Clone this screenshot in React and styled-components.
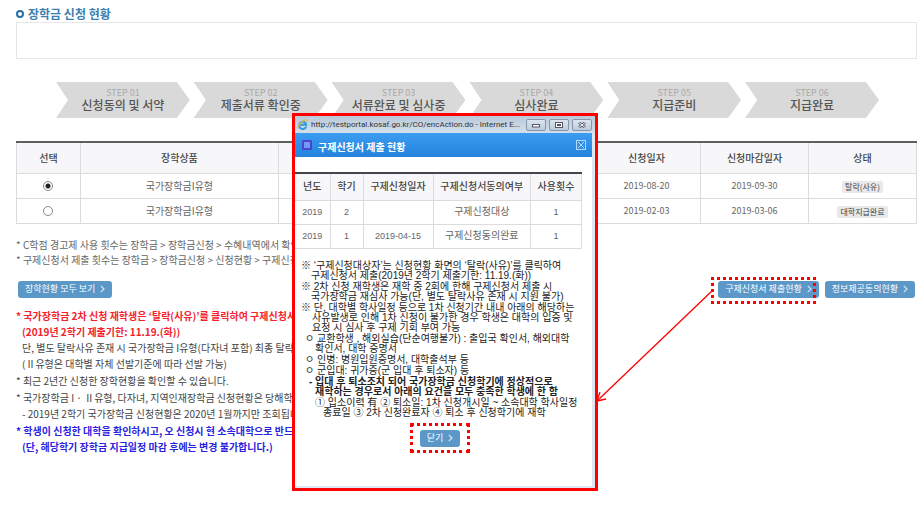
import React, { useState } from 'react'
import styled, { createGlobalStyle } from 'styled-components'

const GlobalStyle = createGlobalStyle`
    *{
        box-sizing: border-box;
    }
    body{
        margin: 0;
        background-color: white;
        overflow: hidden;
    }
    body, button{
        font-family: "Noto Sans CJK KR", sans-serif;
    }
    ul, ol, p, h1, h2{
        margin: 0;
        padding: 0;
        list-style: none;
    }
    button{
        cursor: pointer;
    }
`

const Container = styled.div`
    position: relative;
    padding: 6px 1px 60px 16px;
    font-size: 10px;
    line-height: 16px;
    color: #555;
`
const Title = styled.h1`
    display: flex;
    align-items: center;
    gap: 4px;
    font-size: 12px;
    line-height: 16px;
    font-weight: 700;
    color: #3c80b0;
`
const Ring = styled.span`
    width: 8px;
    height: 8px;
    border: 2px solid #2470a8;
    border-radius: 50%;
`
const SearchBox = styled.div`
    height: 37px;
    border: 1px solid #e6e6e6;
`

const Steps = styled.ol`
    display: flex;
    gap: 4px;
    padding: 23px 38px 23px 40px;
`
const Step = styled.li`
    flex: 1;
    height: 36px;
    padding-top: 5px;
    text-align: center;
    background-color: #d9d9d9;
    clip-path: polygon(0 0, calc(100% - 13px) 0, 100% 50%, calc(100% - 13px) 100%, 0 100%, 12px 50%);
`
const StepNo = styled.div`
    font-size: 9px;
    line-height: 11px;
    color: #a9a9a9;
`
const StepName = styled.div`
    font-size: 12px;
    line-height: 14px;
    font-weight: 500;
    color: #555;
`

const Table = styled.table`
    width: 100%;
    table-layout: fixed;
    border-collapse: collapse;
    border-top: 2px solid #5c605e;
    text-align: center;
    color: #666;
`
const Col = styled.col`
    width: ${props=>props.$width};
`
const Th = styled.th`
    height: 31px;
    padding: 0;
    border: 1px solid #dcdcdc;
    border-top: none;
    background-color: #f7f7f9;
    font-weight: 500;
    color: #444;
`
const Td = styled.td`
    height: 25px;
    padding: 0;
    border: 1px solid #dcdcdc;
    font-size: ${props=>props.$number ? "9px" : "10px"};
`
const Radio = styled.input`
    appearance: none;
    display: block;
    width: 10px;
    height: 10px;
    margin: 0 auto;
    border: 1px solid #8a8a8a;
    border-radius: 50%;
    background-color: white;

    &:checked{
        background-image: radial-gradient(circle, #222 0, #222 2px, white 3px);
    }
`
const Status = styled.span`
    display: inline-block;
    padding: 0 3px;
    border-radius: 2px;
    background-color: #e9e9e9;
    font-size: 8px;
    line-height: 12px;
    color: #444;
`

const Usage = styled.ul`
    padding-top: 13px;
    line-height: 15px;
    white-space: nowrap;
    color: #666;
`
const ButtonRow = styled.div`
    display: flex;
    justify-content: space-between;
    padding: 14px 2px 10px;
`
const ButtonGroup = styled.div`
    display: flex;
    gap: 6px;
`
const Marked = styled.div`
    position: relative;
`
const Mark = styled.span`
    position: absolute;
    inset: ${props=>props.$inset};
    border: 3px dotted #ff0000;
    pointer-events: none;
`
const Button = styled.button`
    display: flex;
    align-items: center;
    gap: 5px;
    height: 17px;
    padding: 0 7px;
    border: none;
    border-radius: 3px;
    background-color: #5b98c8;
    font-size: 9px;
    line-height: 16px;
    color: white;
`

const Notes = styled.ul`
    display: flex;
    flex-direction: column;
    gap: 1px;
    white-space: nowrap;
`
const Note = styled.li`
    padding-left: 6px;
    text-indent: -6px;
    font-weight: ${props=>props.$bold ? 700 : 400};
    color: ${props=>props.$color || "#444"};
`
const NoteLine = styled.p`
    text-indent: 0;
    color: ${props=>props.$color};
    font-weight: 400;
`

const Arrow = styled.svg`
    position: absolute;
    left: 596px;
    top: 288px;
`

const Popup = styled.section`
    position: absolute;
    left: 292px;
    top: 113px;
    width: 306px;
    border: 3px solid #ff0000;
    background-color: #dde6f1;
`
const WindowBar = styled.header`
    display: flex;
    align-items: center;
    gap: 3px;
    height: 17px;
    padding: 0 3px 0 2px;
    background: linear-gradient(#b9c9da, #d3dfeb);
`
const Address = styled.span`
    flex: 1;
    min-width: 0;
    font-family: Roboto, "Noto Sans CJK KR", sans-serif;
    font-size: 8px;
    line-height: 14px;
    white-space: nowrap;
    color: #333;
`
const WindowButton = styled.button`
    display: flex;
    flex-shrink: 0;
    align-items: center;
    justify-content: center;
    width: 20px;
    height: 12px;
    padding: 0;
    border: 1px solid #8796a8;
    border-radius: 2px;
    background: linear-gradient(#dbe5ef, #bccbdc);
`
const PopupBody = styled.div`
    margin-right: 3px;
    margin-bottom: 2px;
    padding-bottom: 39px;
    background-color: white;
`
const PopupHead = styled.div`
    display: flex;
    align-items: center;
    gap: 6px;
    height: 24px;
    padding: 0 6px 0 7px;
    background: linear-gradient(#3b9df1, #2482dc);
`
const Square = styled.span`
    width: 10px;
    height: 10px;
    border: 2px solid #4a44cf;
    border-radius: 1px;
    background-color: #6f9cf0;
`
const PopupTitle = styled.h2`
    flex: 1;
    padding-top: 3px;
    font-size: 10px;
    line-height: 14px;
    font-weight: 700;
    color: white;
`
const CloseIcon = styled.button`
    display: flex;
    padding: 0;
    border: none;
    background: none;
`
const PopupTableWrap = styled.div`
    padding: 15px 10px 12px 0;
`
const PopupTable = styled(Table)`
    border-top-color: #43464f;
    font-family: "Liberation Sans", "Noto Sans CJK KR", sans-serif;

    th{
        height: 27px;
        border-left: none;
    }
    td{
        height: 24px;
        border-left: none;
    }
`
const Guide = styled.ul`
    display: flex;
    flex-direction: column;
    gap: 1px;
    padding-left: 6px;
    font-family: "Liberation Sans", "Noto Sans CJK KR", sans-serif;
    font-size: 10px;
    line-height: 10px;
    white-space: nowrap;
    color: #222;
`
const GuideItem = styled.li`
    padding-left: ${props=>props.$left}px;
    text-indent: -${props=>props.$hang}px;
    font-weight: ${props=>props.$bold ? 700 : 400};
`
const GuideLine = styled.span`
    display: block;

    & + &{
        text-indent: 0;
    }
`
const PopupFooter = styled.div`
    display: flex;
    justify-content: center;
    padding-top: 12px;
    padding-right: 7px;
`

const steps = ["신청동의 및 서약", "제출서류 확인중", "서류완료 및 심사중", "심사완료", "지급준비", "지급완료"]

const rows = [
    { id: 1, name: "국가장학금I유형", date: "2019-08-20", due: "2019-09-30", status: "탈락(사유)" },
    { id: 2, name: "국가장학금I유형", date: "2019-02-03", due: "2019-03-06", status: "대학지급완료" },
]

const popupRows = [
    { year: "2019", term: "2", date: "", agree: "구제신청대상", count: "1" },
    { year: "2019", term: "1", date: "2019-04-15", agree: "구제신청동의완료", count: "1" },
]

const guides = [
    { left: 10, hang: 10, lines: ["※ ‘구제신청대상자’는 신청현황 화면의 ‘탈락(사유)’를 클릭하여", "구제신청서 제출(2019년 2학기 제출기한: 11.19.(화))"] },
    { left: 10, hang: 10, lines: ["※ 2차 신청 재학생은 재학 중 2회에 한해 구제신청서 제출 시", "국가장학금 재심사 가능(단, 별도 탈락사유 존재 시 지원 불가)"] },
    { left: 11, hang: 11, lines: ["※ 단, 대학별 학사일정 등으로 1차 신청기간 내내 아래의 해당하는", "사유발생로 인해 1차 신청이 불가한 경우 학생은 대학의 입증 및", "요청 시 심사 후 구제 기회 부여 가능"] },
    { left: 14, hang: 10, lines: ["ㅇ 교환학생 , 해외실습(단순여행불가) : 출입국 확인서, 해외대학", "확인서, 대학 증명서"] },
    { left: 14, hang: 10, lines: ["ㅇ 인병: 병원입원증명서, 대학출석부 등"] },
    { left: 14, hang: 10, lines: ["ㅇ 군입대: 귀가증(군 입대 후 퇴소자) 등"] },
    { left: 14, hang: 6, bold: true, lines: ["- 입대 후 퇴소조치 되어 국가장학금 신청학기에 정상적으로", "재학하는 경우로서 아래의 요건을 모두 충족한 학생에 한 함"] },
    { left: 22, hang: 8, lines: ["① 입소이력 有 ② 퇴소일: 1차 신청개시일 ~ 소속대학 학사일정", "종료일 ③ 2차 신청완료자 ④ 퇴소 후 신청학기에 재학"] },
]

const Chevron = () => (
    <svg width="5" height="8" viewBox="0 0 5 8" fill="none" stroke="#d6e8f6" strokeWidth="1.2">
        <path d="M0.8 0.8 L4 4 L0.8 7.2"/>
    </svg>
)

const BrowserIcon = () => (
    <svg width="11" height="11" viewBox="0 0 11 11" fill="none">
        <path d="M9.2 7.4 A3.6 3.6 0 1 1 9.3 5.8 H3.2" stroke="#2b9be0" strokeWidth="1.9"/>
        <path d="M1 10 C-0.6 8.6 3.6 2.6 8 1 C10.2 0.2 10.6 1.2 9.8 2.8" stroke="#f0b92c" strokeWidth="1.1"/>
    </svg>
)

const RequestPopup = ({ onClose }) => (
    <Popup aria-label="구제신청서 제출 현황">
        <WindowBar>
            <BrowserIcon/>
            <Address>http://testportal.kosaf.go.kr/CO/encAction.do - Internet E...</Address>
            <WindowButton aria-label="최소화">
                <svg width="8" height="6" viewBox="0 0 8 6"><rect x="0.5" y="2.5" width="7" height="2.5" fill="#fff" stroke="#556"/></svg>
            </WindowButton>
            <WindowButton aria-label="최대화">
                <svg width="8" height="6" viewBox="0 0 8 6"><rect x="0.5" y="0.5" width="7" height="5" fill="#fff" stroke="#556"/><rect x="2.5" y="2.5" width="3" height="1" stroke="#556" fill="none"/></svg>
            </WindowButton>
            <WindowButton aria-label="창 닫기" onClick={onClose}>
                <svg width="8" height="6" viewBox="0 0 8 6"><path d="M1 0.5 L7 5.5 M7 0.5 L1 5.5" stroke="#556" strokeWidth="2.6"/><path d="M1 0.5 L7 5.5 M7 0.5 L1 5.5" stroke="#fff"/></svg>
            </WindowButton>
        </WindowBar>
        <PopupBody>
            <PopupHead>
                <Square/>
                <PopupTitle>구제신청서 제출 현황</PopupTitle>
                <CloseIcon aria-label="닫기" onClick={onClose}>
                    <svg width="10" height="10" viewBox="0 0 10 10" fill="none" stroke="#b5dafa">
                        <rect x="0.5" y="0.5" width="9" height="9"/>
                        <path d="M2 2 L8 8 M8 2 L2 8"/>
                    </svg>
                </CloseIcon>
            </PopupHead>
            <PopupTableWrap>
                <PopupTable>
                    <colgroup>
                        <Col $width="35px"/>
                        <Col $width="33px"/>
                        <Col $width="70px"/>
                        <Col/>
                        <Col $width="51px"/>
                    </colgroup>
                    <thead>
                        <tr>
                            <Th>년도</Th>
                            <Th>학기</Th>
                            <Th>구제신청일자</Th>
                            <Th>구제신청서동의여부</Th>
                            <Th>사용횟수</Th>
                        </tr>
                    </thead>
                    <tbody>
                        {popupRows.map((row)=>(
                            <tr key={row.term}>
                                <Td $number>{row.year}</Td>
                                <Td $number>{row.term}</Td>
                                <Td $number>{row.date}</Td>
                                <Td>{row.agree}</Td>
                                <Td $number>{row.count}</Td>
                            </tr>
                        ))}
                    </tbody>
                </PopupTable>
            </PopupTableWrap>
            <Guide>
                {guides.map((guide)=>(
                    <GuideItem key={guide.lines[0]} $left={guide.left} $hang={guide.hang} $bold={guide.bold}>
                        {guide.lines.map((line)=>(
                            <GuideLine key={line}>{line}</GuideLine>
                        ))}
                    </GuideItem>
                ))}
            </Guide>
            <PopupFooter>
                <Marked>
                    <Button onClick={onClose}>닫기 <Chevron/></Button>
                    <Mark $inset="-7px -10px -6px -10px"/>
                </Marked>
            </PopupFooter>
        </PopupBody>
    </Popup>
)

const App = () => {
    const [selected,setSelected] = useState(1);
    const [open,setOpen] = useState(true);

  return (
    <Container>
        <GlobalStyle/>
        <Title><Ring/>장학금 신청 현황</Title>
        <SearchBox/>
        <Steps>
            {steps.map((name,i)=>(
                <Step key={name}>
                    <StepNo>STEP 0{i+1}</StepNo>
                    <StepName>{name}</StepName>
                </Step>
            ))}
        </Steps>
        <Table>
            <colgroup>
                <Col $width="7.1%"/>
                <Col $width="22%"/>
                <Col/>
                <Col $width="12%"/>
                <Col $width="12%"/>
                <Col $width="12%"/>
            </colgroup>
            <thead>
                <tr>
                    <Th>선택</Th>
                    <Th>장학상품</Th>
                    <Th/>
                    <Th>신청일자</Th>
                    <Th>신청마감일자</Th>
                    <Th>상태</Th>
                </tr>
            </thead>
            <tbody>
                {rows.map((row)=>(
                    <tr key={row.id}>
                        <Td>
                            <Radio
                                type="radio"
                                name="scholarship"
                                aria-label={row.name}
                                checked={selected===row.id}
                                onChange={()=>setSelected(row.id)}
                            />
                        </Td>
                        <Td>{row.name}</Td>
                        <Td/>
                        <Td $number>{row.date}</Td>
                        <Td $number>{row.due}</Td>
                        <Td><Status>{row.status}</Status></Td>
                    </tr>
                ))}
            </tbody>
        </Table>
        <Usage>
            <li>* C학점 경고제 사용 횟수는 장학금 &gt; 장학금신청 &gt; 수혜내역에서 확인</li>
            <li>* 구제신청서 제출 횟수는 장학금 &gt; 장학금신청 &gt; 신청현황 &gt; 구제신청</li>
        </Usage>
        <ButtonRow>
            <Button>장학현황 모두 보기 <Chevron/></Button>
            <ButtonGroup>
                <Marked>
                    <Button onClick={()=>setOpen(true)}>구제신청서 제출현황 <Chevron/></Button>
                    <Mark $inset="-4px 3px -6px -7px"/>
                </Marked>
                <Button>정보제공동의현황 <Chevron/></Button>
            </ButtonGroup>
        </ButtonRow>
        <Notes>
            <Note $bold $color="#f5222b">
                * 국가장학금 2차 신청 재학생은 ‘탈락(사유)’를 클릭하여 구제신청서 제
                <br/>
                (2019년 2학기 제출기한: 11.19.(화))
                <NoteLine $color="#444">단, 별도 탈락사유 존재 시 국가장학금 I유형(다자녀 포함) 최종 탈락</NoteLine>
                <NoteLine $color="#444">(Ⅱ유형은 대학별 자체 선발기준에 따라 선발 가능)</NoteLine>
            </Note>
            <Note>* 최근 2년간 신청한 장학현황을 확인할 수 있습니다.</Note>
            <Note>
                * 국가장학금 I · Ⅱ유형, 다자녀, 지역인재장학금 신청현황은 당해학기에
                <NoteLine>- 2019년 2학기 국가장학금 신청현황은 2020년 1월까지만 조회됩니다</NoteLine>
            </Note>
            <Note $bold $color="#2a22e0">
                * 학생이 신청한 대학을 확인하시고, 오 신청시 현 소속대학으로 반드시
                <br/>
                (단, 해당학기 장학금 지급일정 마감 후에는 변경 불가합니다.)
            </Note>
        </Notes>
        {open && <RequestPopup onClose={()=>setOpen(false)}/>}
        {open && (
            <Arrow width="118" height="116" viewBox="0 0 118 116" fill="none" stroke="#ff0000" strokeWidth="1.3">
                <path d="M117 2 L1 113"/>
                <path d="M4 104 L1 113 L10 111"/>
            </Arrow>
        )}
    </Container>
  )
}

export default App
